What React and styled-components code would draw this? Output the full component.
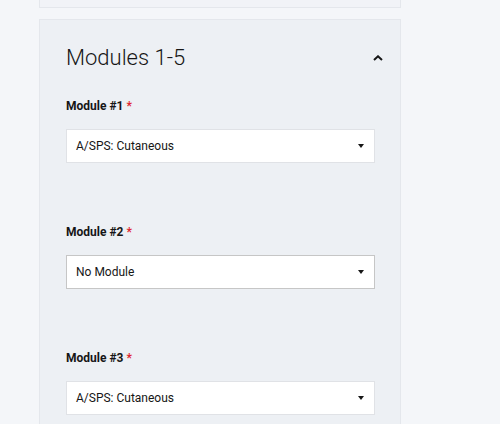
import React from 'react';
import styled, { createGlobalStyle } from 'styled-components';

const GlobalStyle = createGlobalStyle`
    body {
        margin: 0;
        background: #f4f6f9;
        font-family: Roboto, 'Open Sans', sans-serif;
        color: #161616;
    }
`;

const Page = styled.div`
    padding: 0 99px 0 39px;
    display: flex;
    flex-direction: column;
    gap: 11px;
`;

const PrevPanel = styled.div`
    height: 7px;
    background: #f1f3f7;
    border: 1px solid #e4e7ec;
    border-top: none;
`;

const Panel = styled.section`
    background: #edf0f4;
    border: 1px solid #e4e7ec;
    padding: 22px 0 0 26px;
    height: 420px;
`;

const Header = styled.div`
    display: flex;
    align-items: center;
    justify-content: space-between;
    padding-right: 14px;
    margin-bottom: 24px;
`;

const Title = styled.h2`
    margin: 0;
    font-size: 22px;
    line-height: 32px;
    font-weight: 300;
    color: #161616;
`;

const Toggle = styled.button`
    width: 16px;
    height: 16px;
    padding: 0;
    border: none;
    background: none;
    display: flex;
    align-items: center;
    justify-content: center;
`;

const Field = styled.div`
    margin-bottom: 61px;
    width: 309px;
`;

const Label = styled.div`
    font-size: 12px;
    line-height: 16px;
    font-weight: 700;
    margin-bottom: 15px;
`;

const Required = styled.span`
    color: #e0262f;
    margin-left: 3px;
    font-weight: 700;
`;

const Select = styled.div`
    height: 34px;
    box-sizing: border-box;
    background: #ffffff;
    border: 1px solid ${(props) => (props.focused ? '#c6c6c6' : '#e0e2e6')};
    display: flex;
    align-items: center;
    justify-content: space-between;
    padding: 0 9px 0 9px;
    font-size: 12px;
`;

const Caret = styled.span`
    width: 0;
    height: 0;
    border-left: 3.5px solid transparent;
    border-right: 3.5px solid transparent;
    border-top: 4px solid #161616;
    margin-right: 1px;
`;

const modules = [
    { name: 'Module #1', value: 'A/SPS: Cutaneous' },
    { name: 'Module #2', value: 'No Module', focused: true },
    { name: 'Module #3', value: 'A/SPS: Cutaneous' },
];

const App = () => {
    return (
        <>
            <GlobalStyle />
            <Page>
                <PrevPanel />
                <Panel>
                    <Header>
                        <Title>Modules 1-5</Title>
                        <Toggle aria-label="Collapse">
                            <svg width="10" height="6" viewBox="0 0 10 6">
                                <path d="M1 5 L5 1.3 L9 5" fill="none" stroke="#161616" strokeWidth="2" />
                            </svg>
                        </Toggle>
                    </Header>
                    {modules.map((m) => (
                        <Field key={m.name}>
                            <Label>
                                {m.name}
                                <Required>*</Required>
                            </Label>
                            <Select focused={m.focused}>
                                <span>{m.value}</span>
                                <Caret />
                            </Select>
                        </Field>
                    ))}
                </Panel>
            </Page>
        </>
    );
};

export default App;
